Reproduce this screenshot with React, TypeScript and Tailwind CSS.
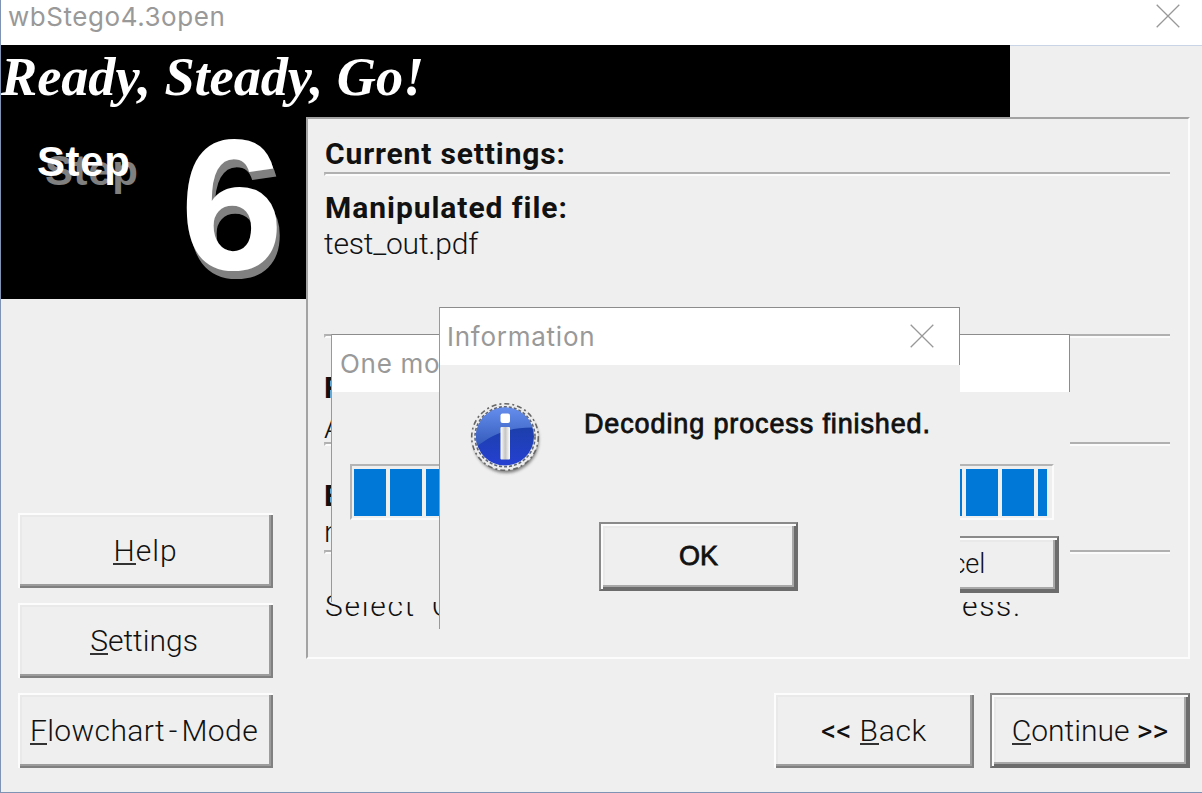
import type { ReactNode } from "react";

const CloseIcon = () => (
  <svg width="24" height="24" viewBox="0 0 24 24" fill="none" stroke="#989898" strokeWidth="1.3">
    <path d="M0.7 0.7 23.3 23.3M23.3 0.7 0.7 23.3" />
  </svg>
);

const InfoIcon = () => (
  <svg width="72" height="76" viewBox="0 0 72 76">
    <defs>
      <linearGradient id="gloss" x1="0" y1="0" x2="0" y2="1">
        <stop offset="0" stopColor="#6c95f4" />
        <stop offset="1" stopColor="#3158b8" />
      </linearGradient>
      <linearGradient id="base" x1="0" y1="0" x2="0" y2="1">
        <stop offset="0.3" stopColor="#1b3fa8" />
        <stop offset="1" stopColor="#2540d2" />
      </linearGradient>
      <linearGradient id="stem" x1="0" y1="0" x2="1" y2="0">
        <stop offset="0" stopColor="#fff" />
        <stop offset="0.5" stopColor="#c4c4c4" />
        <stop offset="1" stopColor="#fff" />
      </linearGradient>
      <clipPath id="disc"><circle cx="35" cy="34.5" r="29" /></clipPath>
      <filter id="soft"><feGaussianBlur stdDeviation="1.5" /></filter>
      <filter id="ring"><feGaussianBlur stdDeviation="0.7" /></filter>
    </defs>
    <circle cx="36" cy="38" r="33" fill="#666" opacity="0.8" filter="url(#soft)" />
    <circle cx="35" cy="35" r="33.5" fill="#ececec" />
    <g filter="url(#ring)" fill="none" stroke="#666">
      <circle cx="35" cy="35" r="33.3" strokeWidth="1.6" strokeDasharray="5 3 2 3" />
      <circle cx="35" cy="34.7" r="30" stroke="#5d6678" strokeWidth="1.6" strokeDasharray="3 2" />
    </g>
    <circle cx="35" cy="34.5" r="29" fill="url(#base)" />
    <path clipPath="url(#disc)" d="M0 0H72V26C46 24 25 29 5 46Z" fill="url(#gloss)" />
    <rect x="30.5" y="11.5" width="9.5" height="9.5" rx="2" fill="#fff" />
    <rect x="30.5" y="25" width="9.5" height="32.5" rx="1" fill="url(#stem)" />
  </svg>
);

function Label({ hot, children }: { hot: string; children: ReactNode }) {
  return (
    <>
      <span className="inline-block leading-[24px] shadow-[0_2px_0_#333]">{hot}</span>
      {children}
    </>
  );
}

const raised =
  "shadow-[inset_2px_2px_0_#fcfcfc,inset_-2px_-2px_0_#808080,inset_-4px_-4px_0_#9c9c9c,inset_4px_4px_0_#e9e9e9]";
const raisedDefault =
  "border-2 border-[#8a8a8a] border-r-[#6c6c6c] border-b-[#6c6c6c] shadow-[inset_2px_2px_0_#fcfcfc,inset_-2px_-2px_0_#6c6c6c,inset_-4px_-4px_0_#a8a8a8,inset_4px_4px_0_#e9e9e9]";

function PushButton({ className, strong, children }: { className: string; strong?: boolean; children: ReactNode }) {
  return (
    <button className={`flex items-center justify-center whitespace-pre bg-[#efefef] ${strong ? raisedDefault : raised} ${className}`}>
      {children}
    </button>
  );
}

const Groove = () => (
  <div className="h-1 w-[846px] border-t-2 border-b-2 border-l-2 border-t-[#b0b0b0] border-b-[#fbfbfb] border-l-[#b8b8b8]" />
);

const blocks = Array.from({ length: 20 }, (_, i) => i);

export default function App() {
  return (
    <div className="relative flex h-[793px] w-[1202px] flex-col overflow-hidden border-b border-l border-[#7f93b4] bg-[#efefef] font-['Roboto',sans-serif] text-[30px] font-light text-[#111]">
      <header className="flex h-[45px] shrink-0 items-start justify-between bg-white pr-[22px] pl-[7px]">
        <span className="mt-[-1px] font-['Inter',sans-serif] text-[26px] leading-[36px] font-normal tracking-[0.55px] text-[#999]">wbStego4.3open</span>
        <div className="mt-1"><CloseIcon /></div>
      </header>
      <div className="h-[73px] shrink-0 border-t border-[#c9d5e6]">
        <h1 className="mt-[-1px] h-[73px] w-[1009px] bg-black font-['Liberation_Serif',serif] text-[54.4px] leading-[65px] font-bold tracking-[-0.1px] whitespace-nowrap text-white italic">Ready, Steady, Go!</h1>
      </div>
      <div className="flex">
        <aside className="flex w-[305px] flex-col">
          <div className="flex h-[181px] bg-black font-['Liberation_Sans',sans-serif] font-bold text-white">
            <span className="mt-[19px] ml-[36px] w-[143px] text-[42px] leading-[50px] tracking-[0.6px] [text-shadow:8px_9px_0_#808080]">Step</span>
            <span className="mt-[-13px] text-[186px] leading-[200px] [text-shadow:3px_8px_0_#808080]">6</span>
          </div>
          <div className="mt-[214px] ml-[17px] flex flex-col gap-[15px]">
            <PushButton className="h-[75px] w-[255px]"><span className="tracking-[1px]"><Label hot="H">elp</Label></span></PushButton>
            <PushButton className="h-[75px] w-[255px] pr-[3px]"><span><Label hot="S">ettings</Label></span></PushButton>
            <PushButton className="h-[75px] w-[255px] pr-[3px]"><span className="tracking-[0.4px] [word-spacing:-4px]"><Label hot="F">lowchart - Mode</Label></span></PushButton>
          </div>
        </aside>
        <main className="mt-[-1px] flex flex-col">
          <section className="flex h-[542px] w-[884px] flex-col border-2 border-t-[#a3a3a3] border-r-[#fcfcfc] border-b-[#fcfcfc] border-l-[#a3a3a3] bg-[#efefef] pl-[16px] whitespace-nowrap">
            <div className="h-[53px] pt-[17px] pl-px leading-[36px] font-bold tracking-[0.85px]">Current settings:</div>
            <Groove />
            <div className="h-[158px] pt-[14px] leading-[36px]">
              <p className="pl-px font-bold tracking-[0.95px]">Manipulated file:</p>
              <p className="tracking-[-0.2px]">test_out.pdf</p>
            </div>
            <Groove />
            <div className="h-[104px] pt-[30px] leading-[40px]">
              <p className="font-bold">R</p>
              <p>A</p>
            </div>
            <Groove />
            <div className="h-[104px] pt-[32px] leading-[36px]">
              <p className="font-bold">E</p>
              <p>n</p>
            </div>
            <Groove />
            <p className="mt-[34px] pl-px leading-[36px] tracking-[1.72px]">Select 'Continue' to start the decoding process.</p>
          </section>
          <div className="mt-[34px] ml-[468px] flex gap-4">
            <PushButton className="h-[75px] w-[200px]"><span className="tracking-[0.7px]"><span className="font-normal tracking-normal">&lt;&lt;</span> <Label hot="B">ack</Label></span></PushButton>
            <PushButton strong className="h-[75px] w-[200px]"><span><Label hot="C">ontinue</Label> <span className="font-normal">&gt;&gt;</span></span></PushButton>
          </div>
        </main>
      </div>

      <div className="absolute top-[334px] left-[330px] flex h-[268px] w-[739px] flex-col border-l border-[#999] bg-[#efefef]">
        <div className="h-[58px] border-t border-r border-[#8c8c8c] bg-white pl-[8px] font-['Inter',sans-serif] text-[26px] leading-[57px] font-normal tracking-[0.7px] text-[#999]">One mo</div>
        <div className="mt-[72px] ml-[18px] flex h-[56px] w-[704px] gap-1 border-2 border-t-[#b4b4b4] border-r-[#fbfbfb] border-b-[#fbfbfb] border-l-[#b4b4b4] pt-[3px] pl-[2px]">
          {blocks.map((i) => <div key={i} className={i === 19 ? "h-[47px] w-[9px] bg-[#0078d7]" : "h-[47px] w-8 bg-[#0078d7]"} />)}
        </div>
        <PushButton strong className="mt-[16px] mr-[11px] h-[57px] w-[228px] self-end text-[27px]">Cancel</PushButton>
      </div>

      <div className="absolute top-[307px] left-[438px] flex h-[322px] w-[521px] flex-col border-l border-[#999] bg-[#efefef]">
        <div className="flex h-[58px] justify-between border-t border-r border-[#8c8c8c] bg-white pr-[25px] pl-[7px] font-['Inter',sans-serif] text-[26px] leading-[57px] font-normal tracking-[0.75px] text-[#999]">
          Information
          <div className="mt-[16px]"><CloseIcon /></div>
        </div>
        <div className="flex h-[111px] font-['Liberation_Sans',sans-serif] text-[27px] font-normal [-webkit-text-stroke:0.8px_#111]">
          <div className="mt-[37px] ml-[30px] w-[114px] [-webkit-text-stroke:0]"><InfoIcon /></div>
          <p className="mt-[41px] leading-[36px] tracking-[0.87px] whitespace-nowrap">Decoding process finished.</p>
        </div>
        <PushButton strong className="mt-[46px] ml-[159px] h-[69px] w-[199px] font-['Liberation_Sans',sans-serif] text-[27px] font-normal [-webkit-text-stroke:0.8px_#111]">OK</PushButton>
      </div>
    </div>
  );
}
